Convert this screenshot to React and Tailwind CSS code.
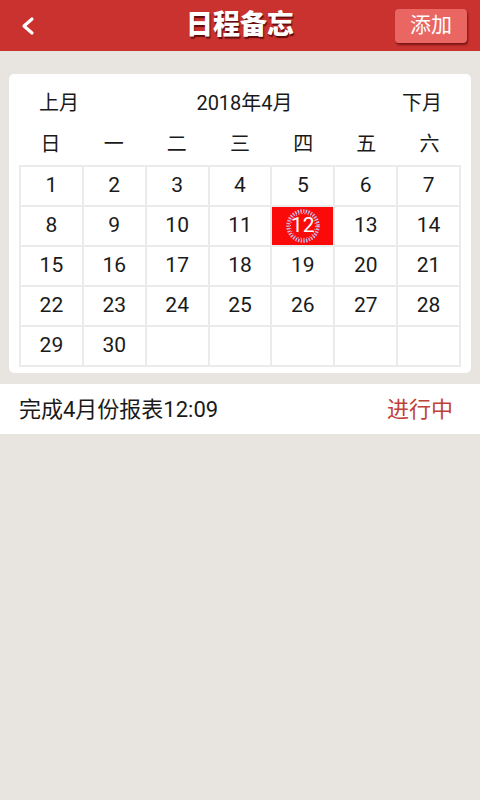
import React from 'react';

const weekDays = ['日', '一', '二', '三', '四', '五', '六'];

// April 2018 starts on a Sunday
const days = [];
for (let i = 1; i <= 35; i++) days.push(i <= 30 ? i : null);

const font = { fontFamily: '"Roboto", "Noto Sans CJK SC", sans-serif' };

const App = () => {
  return (
    <div className="w-[480px] h-[800px] bg-[#e8e5e1] text-[#1a1a1a]" style={font}>
      {/* Header */}
      <div className="h-[51px] bg-[#c9322f] flex items-center px-[18px] relative">
        <svg width="16" height="20" viewBox="0 0 16 20" className="ml-[2px]">
          <path d="M12 3 L4 10 L12 17" stroke="white" strokeWidth="3.2" fill="none" strokeLinecap="round" strokeLinejoin="round" />
        </svg>
        <div className="absolute left-0 right-0 text-center pointer-events-none">
          <span className="text-white text-[27px] font-black [text-shadow:1px_2px_1px_rgba(60,0,0,0.75)]">日程备忘</span>
        </div>
        <button className="ml-auto mr-[-5px] w-[72px] h-[34px] bg-[#ea6662] rounded-[4px] text-white text-[21px] shadow-[1px_2px_2px_rgba(90,10,10,0.7)]">
          添加
        </button>
      </div>

      {/* Calendar card */}
      <div className="mx-[9px] mt-[23px] bg-white rounded-[5px] px-[10px] pb-[6px]">
        <div className="flex items-center justify-between h-[56px] pt-[2px] text-[20px]">
          <span className="pl-[20px]">上月</span>
          <span className="pl-[8px]">2018年4月</span>
          <span className="pr-[19px]">下月</span>
        </div>
        <div className="grid grid-cols-7 h-[35px] pt-[2px] items-start text-[20px] leading-[24px]">
          {weekDays.map((d) => (
            <div key={d} className="text-center">{d}</div>
          ))}
        </div>
        <div className="grid grid-cols-7 border-l-2 border-t-2 border-[#ebebeb]">
          {days.map((d, i) => (
            <div
              key={i}
              className="h-[40px] border-r-2 border-b-2 border-[#ebebeb] flex items-center justify-center text-[21px]"
            >
              {d === 12 ? (
                <div className="w-full h-full bg-[#fb0a0a] flex items-center justify-center relative">
                  <svg width="38" height="38" viewBox="0 0 38 38" className="absolute">
                    <circle cx="19" cy="19" r="15" stroke="#c8b6e6" strokeWidth="3.5" strokeDasharray="1.5 1.2" fill="none" />
                    <circle cx="19" cy="19" r="12.5" stroke="#e8e0f6" strokeWidth="1" strokeDasharray="1 2" fill="none" />
                  </svg>
                  <span className="relative text-white">12</span>
                </div>
              ) : (
                d
              )}
            </div>
          ))}
        </div>
      </div>

      {/* Schedule item */}
      <div className="mt-[11px] h-[50px] bg-white flex items-center justify-between pl-[19px] pr-[27px] text-[22px]">
        <span>完成4月份报表12:09</span>
        <span className="text-[#c0413a]">进行中</span>
      </div>
    </div>
  );
};

export default App;
